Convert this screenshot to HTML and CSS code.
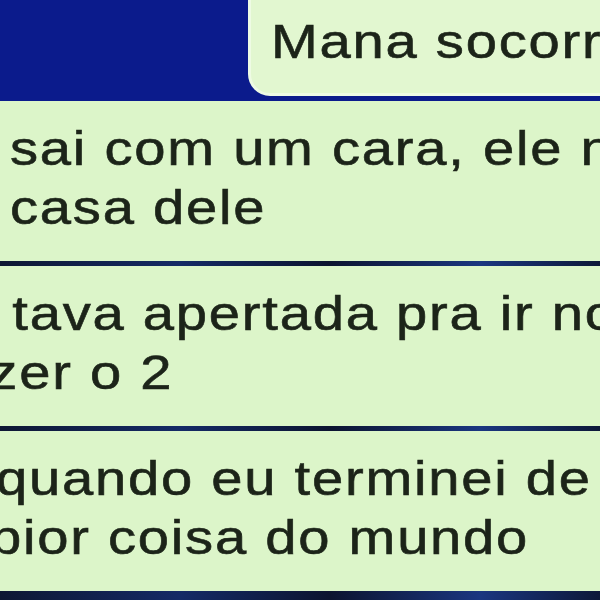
FILE: index.html
```html
<html>

<head>
    <title>Mana socorro</title>
    <link rel="stylesheet" href="styles.css">
</head>

<body>
    <div id="chat">
        <div class="top-row">
            <div class="bubble sent">
                <span class="line">Mana socorro</span>
            </div>
        </div>

        <div class="thread">
            <div class="bubble received">
                <span class="line first-a">sai com um cara, ele nos levou pra</span>
                <span class="line first-a">casa dele</span>
            </div>
            <div class="bubble received">
                <span class="line second-a">e tava apertada pra ir no banheiro</span>
                <span class="line second-b">fazer o 2</span>
            </div>
            <div class="bubble received">
                <span class="line third-a">quando eu terminei de fazer</span>
                <span class="line third-b">pior coisa do mundo</span>
            </div>
        </div>
    </div>
</body>

</html>
```

FILE: styles.css
```css
body {
    margin: 0;
    background-color: #0b1b8c;
    overflow: hidden;
    height: 600px;
}

#chat {
    font-family: "Liberation Sans", Arial, sans-serif;
    font-size: 48px;
    letter-spacing: 1.5px;
    line-height: 59px;
    color: #1c2419;
    -webkit-text-stroke: 0.6px #1c2419;
}

.top-row {
    height: 101px;
    overflow: hidden;
}

.bubble {
    background-color: #dcf5c9;
    white-space: nowrap;
    overflow: hidden;
}

/* the screenshot is stretched sideways */
.line {
    display: block;
    transform: scaleX(1.17);
    transform-origin: left center;
}

.sent {
    margin-left: 248px;
    margin-top: -22px;
    width: 420px;
    height: 118px;
    box-sizing: border-box;
    border: 3px solid #eefbe4;
    border-radius: 22px;
    padding: 31px 0 0 20px;
    background-color: #e2f7d0;
}

.thread {
    display: flex;
    flex-direction: column;
    gap: 5px;
    height: 499px;
    background: linear-gradient(90deg, #0e1733 0%, #142a66 30%, #0c1430 55%, #1a3680 80%, #0d1838 100%);
}

.received {
    height: 160px;
    box-sizing: border-box;
    padding: 18px 0 0 0;
}

/* offsets where the crop cuts the start of a line */
.first-a { margin-left: 10px; }
.second-a { margin-left: -38px; }
.second-b { margin-left: -61px; }
.third-a { margin-left: -4px; }
.third-b { margin-left: -10px; }
```
